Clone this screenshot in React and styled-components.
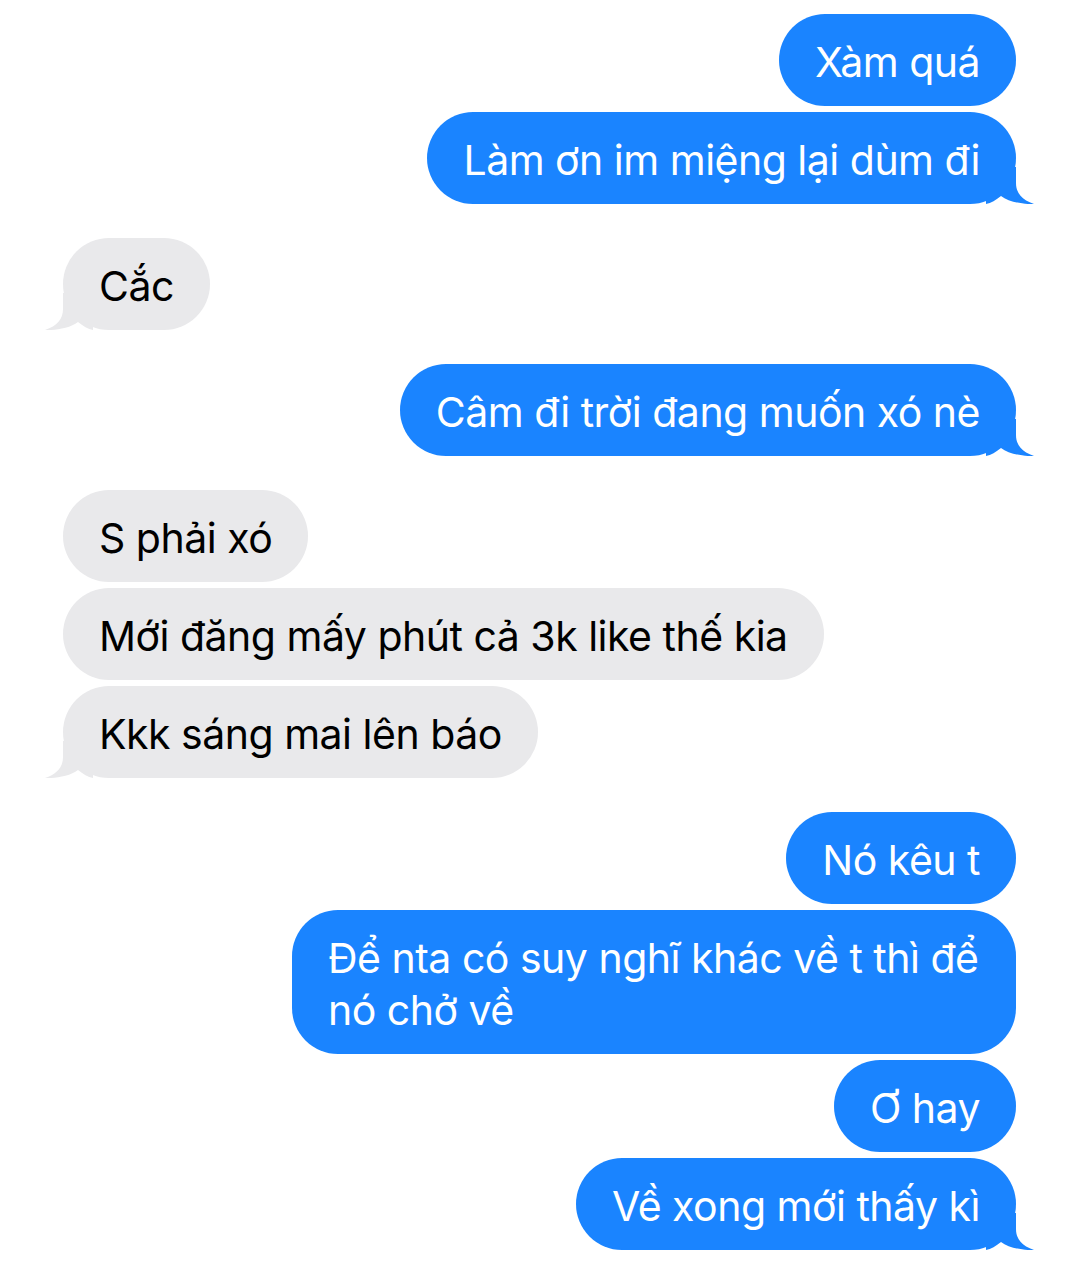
import React from "react";
import styled, { createGlobalStyle } from "styled-components";

const GlobalStyle = createGlobalStyle`
  html, body {
    margin: 0;
    padding: 0;
    background: #ffffff;
  }
  body {
    font-family: Inter, "Noto Sans", "Liberation Sans", sans-serif;
    -webkit-font-smoothing: antialiased;
  }
`;

const Thread = styled.div`
  width: 1080px;
  box-sizing: border-box;
  padding: 14px 64px 18px 63px;
  display: flex;
  flex-direction: column;
  gap: 34px;
`;

const Group = styled.div`
  display: flex;
  flex-direction: column;
  align-items: ${(p) => (p.$sent ? "flex-end" : "flex-start")};
  gap: 6px;
`;

const Bubble = styled.div`
  position: relative;
  box-sizing: border-box;
  max-width: ${(p) => (p.$sent ? "724px" : "780px")};
  padding: 22px 36px 18px;
  border-radius: 46px;
  font-size: 41px;
  line-height: 52px;
  letter-spacing: -0.5px;
  background: ${(p) => (p.$sent ? "#1a84ff" : "#e9e9eb")};
  color: ${(p) => (p.$sent ? "#ffffff" : "#000000")};
`;

const Tail = styled.svg`
  position: absolute;
  bottom: 0;
  width: 48px;
  height: 37px;
  ${(p) =>
    p.$sent
      ? "right: -18px;"
      : "left: -18px; transform: scaleX(-1);"}
  fill: ${(p) => (p.$sent ? "#1a84ff" : "#e9e9eb")};
`;

const BubbleTail = ({ sent }) => (
  <Tail $sent={sent} viewBox="0 0 48 37">
    <path d="M0 0 H30 V16 C30 26 36 33 48 37 C40 37.6 23 35.5 15 29 C10 33 5 36 0 37 Z" />
  </Tail>
);

const groups = [
  { sent: true, msgs: ["Xàm quá", "Làm ơn im miệng lại dùm đi"] },
  { sent: false, msgs: ["Cắc"] },
  { sent: true, msgs: ["Câm đi trời đang muốn xó nè"] },
  {
    sent: false,
    msgs: ["S phải xó", "Mới đăng mấy phút cả 3k like thế kia", "Kkk sáng mai lên báo"],
  },
  {
    sent: true,
    msgs: [
      "Nó kêu t",
      "Để nta có suy nghĩ khác về t thì để nó chở về",
      "Ơ hay",
      "Về xong mới thấy kì",
    ],
  },
];

export default function App() {
  return (
    <>
      <GlobalStyle />
      <Thread>
        {groups.map((g, gi) => (
          <Group key={gi} $sent={g.sent}>
            {g.msgs.map((m, mi) => (
              <Bubble key={mi} $sent={g.sent}>
                {m}
                {mi === g.msgs.length - 1 && <BubbleTail sent={g.sent} />}
              </Bubble>
            ))}
          </Group>
        ))}
      </Thread>
    </>
  );
}
